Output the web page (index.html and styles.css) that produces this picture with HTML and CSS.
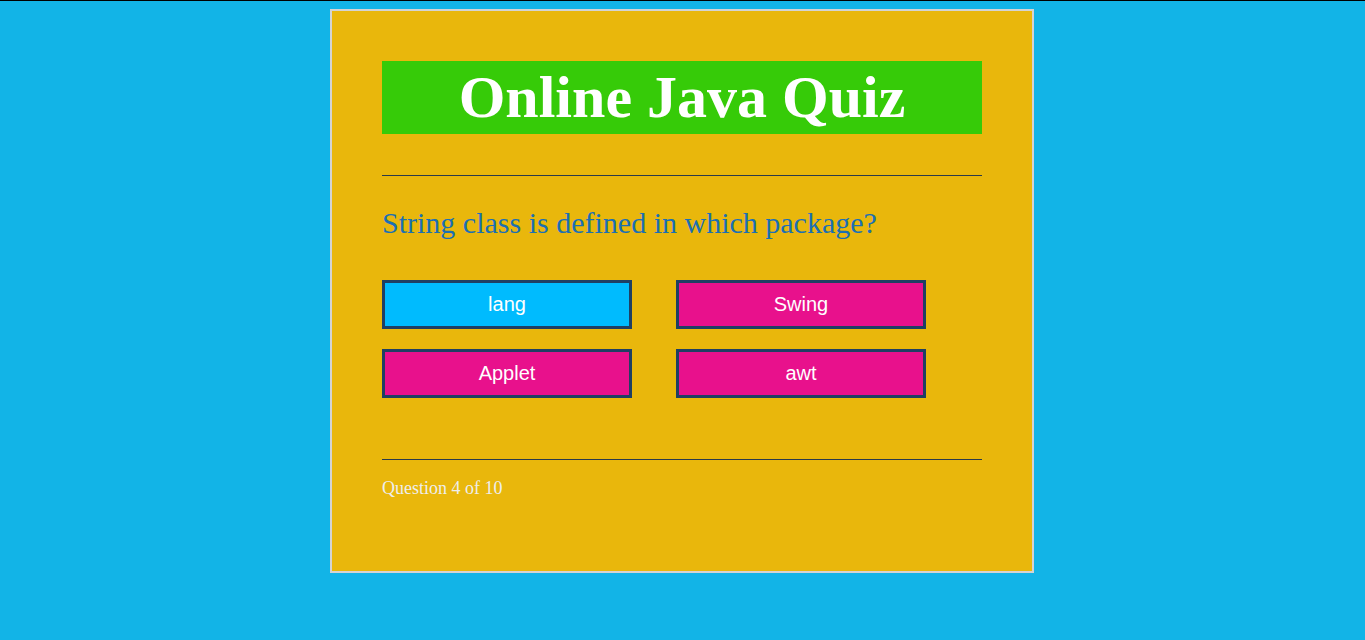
FILE: index.html
```html
<!DOCTYPE html>
<html>
<head>
<meta charset="utf-8">
<title>Online Java Quiz</title>
<link rel="stylesheet" href="styles.css">
</head>
<body>
<div class="quiz">
  <h1 class="title">Online Java Quiz</h1>
  <hr class="rule rule-top">
  <p class="question">String class is defined in which package?</p>
  <div class="choices">
    <button class="choice choice-selected">lang</button>
    <button class="choice">Swing</button>
    <button class="choice">Applet</button>
    <button class="choice">awt</button>
  </div>
  <hr class="rule rule-bottom">
  <p class="progress">Question 4 of 10</p>
</div>
</body>
</html>
```
FILE: styles.css
```css
html {
  border-top: 1px solid #000;
  background: #12b4e7;
}
body {
  margin: 8px 9px 8px 8px;
  background: #12b4e7;
  font-family: "Liberation Serif", "Times New Roman", serif;
}
.quiz {
  width: 600px;
  min-height: 460px;
  margin: 0 auto;
  padding: 50px;
  background: #e9b70c;
  border: 2px solid #d4d4d4;
}
.title {
  margin: 0;
  height: 73px;
  line-height: 73px;
  background: #36cb08;
  color: #fff;
  text-align: center;
  font-size: 60px;
  font-weight: bold;
}
.rule {
  margin: 0;
  height: 0;
  border: 0;
  border-top: 1px solid #2a3a4a;
}
.rule-top {
  margin-top: 41px;
}
.question {
  margin: 30px 0 0;
  color: #1b6fb3;
  font-size: 30px;
  line-height: 34px;
}
.choices {
  display: grid;
  grid-template-columns: 250px 250px;
  column-gap: 44px;
  row-gap: 20px;
  margin-top: 40px;
}
.choice {
  height: 49px;
  margin: 0;
  padding: 0;
  border: 3px solid #1f3f63;
  background: #e8118c;
  color: #fff;
  font-family: "Liberation Sans", Arial, sans-serif;
  font-size: 20px;
}
.choice-selected {
  background: #00bbfe;
}
.rule-bottom {
  margin-top: 61px;
}
.progress {
  margin: 18px 0 0;
  color: #eeeeee;
  font-size: 18px;
  line-height: 20px;
}
```
